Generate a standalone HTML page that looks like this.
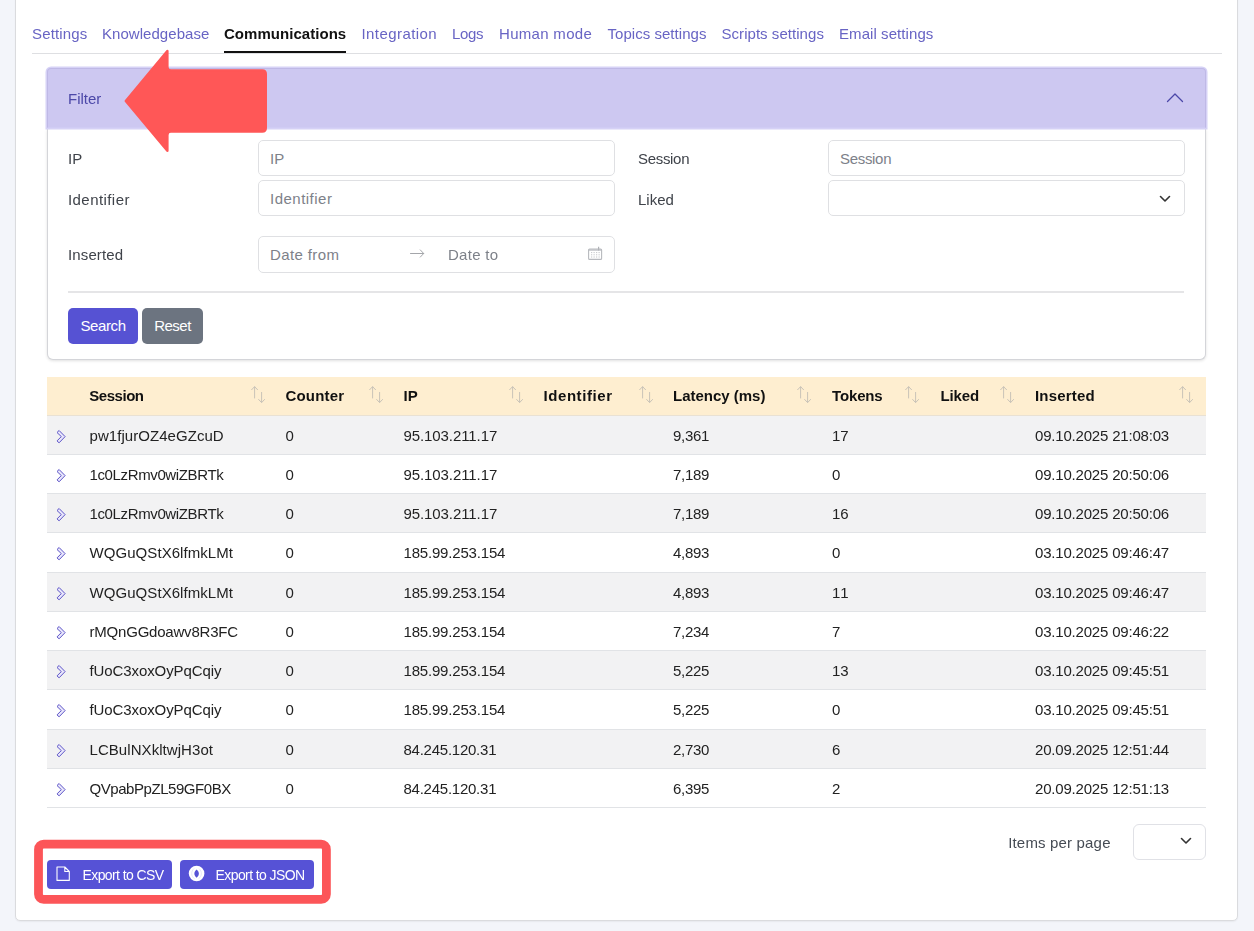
<!DOCTYPE html>
<html lang="en">
<head>
<meta charset="utf-8">
<title>Communications</title>
<style>
*{box-sizing:border-box;margin:0;padding:0}
html,body{width:1254px;height:931px;overflow:hidden}
body{background:#f3f5fa;font-family:"Liberation Sans",sans-serif;font-size:15px;color:#212529;position:relative}
.abs{position:absolute}
.t{white-space:nowrap}
.card{left:15px;top:-10px;width:1223px;height:931px;background:#fff;border:1px solid #dadbde;border-radius:5px;box-shadow:0 1px 2px rgba(0,0,0,.06)}
.tabs{left:32px;top:14px;width:1190px;height:40px;border-bottom:1px solid #dedfe2}
.tab{position:absolute;top:10px;font-size:15px;color:#6864c4;white-space:nowrap;line-height:20px}
.tab.active{color:#111;font-weight:700}
.tab.active::after{content:"";position:absolute;left:0;right:0;top:27px;height:2px;background:#111}
.fhead{left:47px;top:68px;width:1159px;height:60px;background:#cdc8f1;border:1px solid #bfb9e6;border-bottom-color:#d0ccf4;border-radius:4px 4px 0 0;box-shadow:0 0 0 1.5px #d6d2f6}
.fbody{left:47px;top:129px;width:1159px;height:231px;background:#fff;border:1px solid #d4d5d9;border-top:none;border-radius:0 0 6px 6px;box-shadow:0 1px 3px rgba(0,0,0,.12)}
.lbl{position:absolute;font-size:15px;color:#3f434a;line-height:20px;white-space:nowrap}
.inp{position:absolute;height:35.5px;width:357px;border:1px solid #dfe0e3;border-radius:5px;background:#fff;font-size:15px;color:#7d8189;line-height:36px;padding-left:11px;white-space:nowrap}
.btn{position:absolute;color:#fff;font-size:15px;border-radius:5px;text-align:center;white-space:nowrap}
.thead{left:47px;top:377px;width:1159px;height:38.5px;background:#feeed0;border-bottom:1px solid #e9e1d3;font-weight:700;color:#111;line-height:38px}
.row{left:47px;width:1159px;height:39.28px;border-bottom:1px solid #e1e3e6;line-height:39px;color:#222}
.row.odd{background:#f2f2f3}
.c{position:absolute;top:0;white-space:nowrap;font-size:15px}
.srt{position:absolute;top:8.5px}
.exp{position:absolute;left:8px;top:13px}
.xb{top:860px;height:29px;line-height:30px;font-size:14px;background:#5652d6;border-radius:4px;text-align:left}
</style>
</head>
<body>
<div id="wrap" style="position:absolute;left:0;top:0;width:1254px;height:931px;opacity:.999">
<div class="abs card"></div>
<div class="abs tabs">
  <span class="tab" style="left:0px"><span class="t kt" style="letter-spacing:0.155px">Settings</span></span>
  <span class="tab" style="left:70px"><span class="t kt" style="letter-spacing:0.045px">Knowledgebase</span></span>
  <span class="tab active" style="left:192px"><span class="t kt" style="letter-spacing:0.039px">Communications</span></span>
  <span class="tab" style="left:329.5px"><span class="t kt" style="letter-spacing:0.431px">Integration</span></span>
  <span class="tab" style="left:420px"><span class="t kt" style="letter-spacing:-0.310px">Logs</span></span>
  <span class="tab" style="left:467px"><span class="t kt" style="letter-spacing:0.306px">Human mode</span></span>
  <span class="tab" style="left:575.5px"><span class="t kt" style="letter-spacing:0.037px">Topics settings</span></span>
  <span class="tab" style="left:689.5px"><span class="t kt" style="letter-spacing:0.045px">Scripts settings</span></span>
  <span class="tab" style="left:807px"><span class="t kt" style="letter-spacing:0.071px">Email settings</span></span>
</div>
<div class="abs fbody"></div>
<div class="abs fhead"></div>
<div class="lbl" style="left:68px;top:89px;color:#4b47a8"><span class="t kl">Filter</span></div>
<svg class="abs" style="left:1166px;top:90px" width="18" height="16" viewBox="0 0 18 16"><path d="M1.5 11.5 L9 4 L16.5 11.5" fill="none" stroke="#4b47a8" stroke-width="1.3" stroke-linecap="round" stroke-linejoin="round"/></svg>
<div class="lbl" style="left:68px;top:149px"><span class="t kl">IP</span></div>
<div class="lbl" style="left:68px;top:190px"><span class="t kl" style="letter-spacing:0.430px">Identifier</span></div>
<div class="lbl" style="left:68px;top:245px"><span class="t kl" style="letter-spacing:0.127px">Inserted</span></div>
<div class="lbl" style="left:638px;top:149px"><span class="t kl" style="letter-spacing:-0.312px">Session</span></div>
<div class="lbl" style="left:638px;top:190px"><span class="t kl">Liked</span></div>
<div class="inp" style="left:258px;top:140px"><span class="t kp">IP</span></div>
<div class="inp" style="left:258px;top:180px"><span class="t kp" style="letter-spacing:0.485px">Identifier</span></div>
<div class="inp" style="left:828px;top:140px"><span class="t kp" style="letter-spacing:-0.312px">Session</span></div>
<div class="inp" style="left:828px;top:180px"></div>
<svg class="abs" style="left:1159px;top:194px" width="12" height="10" viewBox="0 0 12 10"><path d="M1.5 2.5 L6 7 L10.5 2.5" fill="none" stroke="#333" stroke-width="1.6" stroke-linecap="round" stroke-linejoin="round"/></svg>
<div class="inp" style="left:258px;top:236px;height:36.5px;line-height:35.5px"><span class="t kp" style="letter-spacing:0.380px">Date from</span><span style="position:absolute;left:189px;top:0"><span class="t kp" style="letter-spacing:0.289px">Date to</span></span></div>
<svg class="abs" style="left:409px;top:248px" width="17" height="12" viewBox="0 0 17 12"><path d="M1.5 5.5 H14.6 M11.3 1.9 L14.7 5.5 L11.3 9.1" fill="none" stroke="#a4a6aa" stroke-width="1" stroke-linecap="round" stroke-linejoin="round"/></svg>
<svg class="abs" style="left:587px;top:246px" width="16" height="16" viewBox="0 0 16 16"><rect x="1.6" y="3" width="13" height="10.4" rx="1" fill="none" stroke="#b7b9be" stroke-width="1.1"/><path d="M1.6 4 H14.6" fill="none" stroke="#b7b9be" stroke-width="1.3"/><path d="M11.6 0.8 V4.6" fill="none" stroke="#b0b2b7" stroke-width="1.2"/><path d="M4.2 6.6h1M6.6 6.6h1M9.2 6.6h1M11.6 6.6h1M4.2 8.8h1M6.6 8.8h1M9.2 8.8h1M11.6 8.8h1M4.2 11h1M6.6 11h1M9.2 11h1M11.6 11h1" stroke="#b7b9be" stroke-width="1"/></svg>
<div class="abs" style="left:68px;top:291px;width:1116px;height:2px;background:#e5e5e7"></div>
<div class="btn" style="left:68px;top:308px;width:70px;height:36px;line-height:36px;background:#5652d3"><span class="t kb" style="letter-spacing:-0.387px">Search</span></div>
<div class="btn" style="left:142px;top:308px;width:61px;height:36px;line-height:36px;background:#6c7480"><span class="t kb" style="letter-spacing:-0.497px">Reset</span></div>
<div class="abs thead"><span class="c" style="left:42.3px"><span class="t kh" style="letter-spacing:-0.473px">Session</span></span><span class="c" style="left:238.5px"><span class="t kh" style="letter-spacing:0.183px">Counter</span></span><span class="c" style="left:356.5px"><span class="t kh">IP</span></span><span class="c" style="left:496.5px"><span class="t kh" style="letter-spacing:0.572px">Identifier</span></span><span class="c" style="left:626px"><span class="t kh" style="letter-spacing:-0.012px">Latency (ms)</span></span><span class="c" style="left:785px"><span class="t kh" style="letter-spacing:-0.142px">Tokens</span></span><span class="c" style="left:893.5px"><span class="t kh" style="letter-spacing:-0.147px">Liked</span></span><span class="c" style="left:988px"><span class="t kh" style="letter-spacing:0.192px">Inserted</span></span><svg class="srt" style="left:204.0px" width="15" height="18" viewBox="0 0 15 18"><path d="M3.6 12.4 V0.6 M0.4 4 L3.6 0.6 L6.8 4 M10.6 6 V16.6 M7.4 13.2 L10.6 16.6 L13.8 13.2" fill="none" stroke="#c9c3b8" stroke-width="1"/></svg><svg class="srt" style="left:321.8px" width="15" height="18" viewBox="0 0 15 18"><path d="M3.6 12.4 V0.6 M0.4 4 L3.6 0.6 L6.8 4 M10.6 6 V16.6 M7.4 13.2 L10.6 16.6 L13.8 13.2" fill="none" stroke="#c9c3b8" stroke-width="1"/></svg><svg class="srt" style="left:461.7px" width="15" height="18" viewBox="0 0 15 18"><path d="M3.6 12.4 V0.6 M0.4 4 L3.6 0.6 L6.8 4 M10.6 6 V16.6 M7.4 13.2 L10.6 16.6 L13.8 13.2" fill="none" stroke="#c9c3b8" stroke-width="1"/></svg><svg class="srt" style="left:591.7px" width="15" height="18" viewBox="0 0 15 18"><path d="M3.6 12.4 V0.6 M0.4 4 L3.6 0.6 L6.8 4 M10.6 6 V16.6 M7.4 13.2 L10.6 16.6 L13.8 13.2" fill="none" stroke="#c9c3b8" stroke-width="1"/></svg><svg class="srt" style="left:749.7px" width="15" height="18" viewBox="0 0 15 18"><path d="M3.6 12.4 V0.6 M0.4 4 L3.6 0.6 L6.8 4 M10.6 6 V16.6 M7.4 13.2 L10.6 16.6 L13.8 13.2" fill="none" stroke="#c9c3b8" stroke-width="1"/></svg><svg class="srt" style="left:858.4px" width="15" height="18" viewBox="0 0 15 18"><path d="M3.6 12.4 V0.6 M0.4 4 L3.6 0.6 L6.8 4 M10.6 6 V16.6 M7.4 13.2 L10.6 16.6 L13.8 13.2" fill="none" stroke="#c9c3b8" stroke-width="1"/></svg><svg class="srt" style="left:953.4px" width="15" height="18" viewBox="0 0 15 18"><path d="M3.6 12.4 V0.6 M0.4 4 L3.6 0.6 L6.8 4 M10.6 6 V16.6 M7.4 13.2 L10.6 16.6 L13.8 13.2" fill="none" stroke="#c9c3b8" stroke-width="1"/></svg><svg class="srt" style="left:1131.6px" width="15" height="18" viewBox="0 0 15 18"><path d="M3.6 12.4 V0.6 M0.4 4 L3.6 0.6 L6.8 4 M10.6 6 V16.6 M7.4 13.2 L10.6 16.6 L13.8 13.2" fill="none" stroke="#c9c3b8" stroke-width="1"/></svg></div>
<div class="abs row odd" style="top:415.50px"><svg class="exp" width="12" height="16" viewBox="0 0 12 16"><path d="M4.1 1.5 L10.1 7.6 L4.1 13.8 L2 11.9 L6.3 7.6 L2 3.5 Z" fill="#e9e7fb" stroke="#5d54c8" stroke-width="1" stroke-linejoin="round"/></svg><span class="c" style="left:42.5px"><span class="t kd" style="letter-spacing:0.054px">pw1fjurOZ4eGZcuD</span></span><span class="c" style="left:238.5px"><span class="t kd">0</span></span><span class="c" style="left:356.5px"><span class="t kd" style="letter-spacing:-0.085px">95.103.211.17</span></span><span class="c" style="left:626px"><span class="t kd" style="letter-spacing:-0.286px">9,361</span></span><span class="c" style="left:785px"><span class="t kd" style="letter-spacing:0.007px">17</span></span><span class="c" style="left:988px"><span class="t kd" style="letter-spacing:-0.191px">09.10.2025 21:08:03</span></span></div>
<div class="abs row" style="top:454.78px"><svg class="exp" width="12" height="16" viewBox="0 0 12 16"><path d="M4.1 1.5 L10.1 7.6 L4.1 13.8 L2 11.9 L6.3 7.6 L2 3.5 Z" fill="#e9e7fb" stroke="#5d54c8" stroke-width="1" stroke-linejoin="round"/></svg><span class="c" style="left:42.5px"><span class="t kd" style="letter-spacing:-0.371px">1c0LzRmv0wiZBRTk</span></span><span class="c" style="left:238.5px"><span class="t kd">0</span></span><span class="c" style="left:356.5px"><span class="t kd" style="letter-spacing:-0.085px">95.103.211.17</span></span><span class="c" style="left:626px"><span class="t kd" style="letter-spacing:-0.286px">7,189</span></span><span class="c" style="left:785px"><span class="t kd">0</span></span><span class="c" style="left:988px"><span class="t kd" style="letter-spacing:-0.191px">09.10.2025 20:50:06</span></span></div>
<div class="abs row odd" style="top:494.06px"><svg class="exp" width="12" height="16" viewBox="0 0 12 16"><path d="M4.1 1.5 L10.1 7.6 L4.1 13.8 L2 11.9 L6.3 7.6 L2 3.5 Z" fill="#e9e7fb" stroke="#5d54c8" stroke-width="1" stroke-linejoin="round"/></svg><span class="c" style="left:42.5px"><span class="t kd" style="letter-spacing:-0.371px">1c0LzRmv0wiZBRTk</span></span><span class="c" style="left:238.5px"><span class="t kd">0</span></span><span class="c" style="left:356.5px"><span class="t kd" style="letter-spacing:-0.085px">95.103.211.17</span></span><span class="c" style="left:626px"><span class="t kd" style="letter-spacing:-0.286px">7,189</span></span><span class="c" style="left:785px"><span class="t kd" style="letter-spacing:0.007px">16</span></span><span class="c" style="left:988px"><span class="t kd" style="letter-spacing:-0.191px">09.10.2025 20:50:06</span></span></div>
<div class="abs row" style="top:533.34px"><svg class="exp" width="12" height="16" viewBox="0 0 12 16"><path d="M4.1 1.5 L10.1 7.6 L4.1 13.8 L2 11.9 L6.3 7.6 L2 3.5 Z" fill="#e9e7fb" stroke="#5d54c8" stroke-width="1" stroke-linejoin="round"/></svg><span class="c" style="left:42.5px"><span class="t kd" style="letter-spacing:0.065px">WQGuQStX6lfmkLMt</span></span><span class="c" style="left:238.5px"><span class="t kd">0</span></span><span class="c" style="left:356.5px"><span class="t kd" style="letter-spacing:-0.183px">185.99.253.154</span></span><span class="c" style="left:626px"><span class="t kd" style="letter-spacing:-0.286px">4,893</span></span><span class="c" style="left:785px"><span class="t kd">0</span></span><span class="c" style="left:988px"><span class="t kd" style="letter-spacing:-0.191px">03.10.2025 09:46:47</span></span></div>
<div class="abs row odd" style="top:572.62px"><svg class="exp" width="12" height="16" viewBox="0 0 12 16"><path d="M4.1 1.5 L10.1 7.6 L4.1 13.8 L2 11.9 L6.3 7.6 L2 3.5 Z" fill="#e9e7fb" stroke="#5d54c8" stroke-width="1" stroke-linejoin="round"/></svg><span class="c" style="left:42.5px"><span class="t kd" style="letter-spacing:0.065px">WQGuQStX6lfmkLMt</span></span><span class="c" style="left:238.5px"><span class="t kd">0</span></span><span class="c" style="left:356.5px"><span class="t kd" style="letter-spacing:-0.183px">185.99.253.154</span></span><span class="c" style="left:626px"><span class="t kd" style="letter-spacing:-0.286px">4,893</span></span><span class="c" style="left:785px"><span class="t kd" style="letter-spacing:1.125px">11</span></span><span class="c" style="left:988px"><span class="t kd" style="letter-spacing:-0.191px">03.10.2025 09:46:47</span></span></div>
<div class="abs row" style="top:611.90px"><svg class="exp" width="12" height="16" viewBox="0 0 12 16"><path d="M4.1 1.5 L10.1 7.6 L4.1 13.8 L2 11.9 L6.3 7.6 L2 3.5 Z" fill="#e9e7fb" stroke="#5d54c8" stroke-width="1" stroke-linejoin="round"/></svg><span class="c" style="left:42.5px"><span class="t kd" style="letter-spacing:-0.208px">rMQnGGdoawv8R3FC</span></span><span class="c" style="left:238.5px"><span class="t kd">0</span></span><span class="c" style="left:356.5px"><span class="t kd" style="letter-spacing:-0.183px">185.99.253.154</span></span><span class="c" style="left:626px"><span class="t kd" style="letter-spacing:-0.286px">7,234</span></span><span class="c" style="left:785px"><span class="t kd">7</span></span><span class="c" style="left:988px"><span class="t kd" style="letter-spacing:-0.191px">03.10.2025 09:46:22</span></span></div>
<div class="abs row odd" style="top:651.18px"><svg class="exp" width="12" height="16" viewBox="0 0 12 16"><path d="M4.1 1.5 L10.1 7.6 L4.1 13.8 L2 11.9 L6.3 7.6 L2 3.5 Z" fill="#e9e7fb" stroke="#5d54c8" stroke-width="1" stroke-linejoin="round"/></svg><span class="c" style="left:42.5px"><span class="t kd" style="letter-spacing:-0.093px">fUoC3xoxOyPqCqiy</span></span><span class="c" style="left:238.5px"><span class="t kd">0</span></span><span class="c" style="left:356.5px"><span class="t kd" style="letter-spacing:-0.183px">185.99.253.154</span></span><span class="c" style="left:626px"><span class="t kd" style="letter-spacing:-0.286px">5,225</span></span><span class="c" style="left:785px"><span class="t kd" style="letter-spacing:0.007px">13</span></span><span class="c" style="left:988px"><span class="t kd" style="letter-spacing:-0.191px">03.10.2025 09:45:51</span></span></div>
<div class="abs row" style="top:690.46px"><svg class="exp" width="12" height="16" viewBox="0 0 12 16"><path d="M4.1 1.5 L10.1 7.6 L4.1 13.8 L2 11.9 L6.3 7.6 L2 3.5 Z" fill="#e9e7fb" stroke="#5d54c8" stroke-width="1" stroke-linejoin="round"/></svg><span class="c" style="left:42.5px"><span class="t kd" style="letter-spacing:-0.093px">fUoC3xoxOyPqCqiy</span></span><span class="c" style="left:238.5px"><span class="t kd">0</span></span><span class="c" style="left:356.5px"><span class="t kd" style="letter-spacing:-0.183px">185.99.253.154</span></span><span class="c" style="left:626px"><span class="t kd" style="letter-spacing:-0.286px">5,225</span></span><span class="c" style="left:785px"><span class="t kd">0</span></span><span class="c" style="left:988px"><span class="t kd" style="letter-spacing:-0.191px">03.10.2025 09:45:51</span></span></div>
<div class="abs row odd" style="top:729.74px"><svg class="exp" width="12" height="16" viewBox="0 0 12 16"><path d="M4.1 1.5 L10.1 7.6 L4.1 13.8 L2 11.9 L6.3 7.6 L2 3.5 Z" fill="#e9e7fb" stroke="#5d54c8" stroke-width="1" stroke-linejoin="round"/></svg><span class="c" style="left:42.5px"><span class="t kd" style="letter-spacing:0.063px">LCBulNXkltwjH3ot</span></span><span class="c" style="left:238.5px"><span class="t kd">0</span></span><span class="c" style="left:356.5px"><span class="t kd" style="letter-spacing:-0.245px">84.245.120.31</span></span><span class="c" style="left:626px"><span class="t kd" style="letter-spacing:-0.286px">2,730</span></span><span class="c" style="left:785px"><span class="t kd">6</span></span><span class="c" style="left:988px"><span class="t kd" style="letter-spacing:-0.191px">20.09.2025 12:51:44</span></span></div>
<div class="abs row" style="top:769.02px"><svg class="exp" width="12" height="16" viewBox="0 0 12 16"><path d="M4.1 1.5 L10.1 7.6 L4.1 13.8 L2 11.9 L6.3 7.6 L2 3.5 Z" fill="#e9e7fb" stroke="#5d54c8" stroke-width="1" stroke-linejoin="round"/></svg><span class="c" style="left:42.5px"><span class="t kd" style="letter-spacing:-0.442px">QVpabPpZL59GF0BX</span></span><span class="c" style="left:238.5px"><span class="t kd">0</span></span><span class="c" style="left:356.5px"><span class="t kd" style="letter-spacing:-0.245px">84.245.120.31</span></span><span class="c" style="left:626px"><span class="t kd" style="letter-spacing:-0.286px">6,395</span></span><span class="c" style="left:785px"><span class="t kd">2</span></span><span class="c" style="left:988px"><span class="t kd" style="letter-spacing:-0.191px">20.09.2025 12:51:13</span></span></div>
<div class="lbl" style="left:1008.2px;top:832.5px;color:#454b54"><span class="t kl" style="letter-spacing:0.172px">Items per page</span></div>
<div class="abs" style="left:1133px;top:824px;width:73px;height:36px;border:1px solid #e0e1e6;border-radius:6px;background:#fff"></div>
<svg class="abs" style="left:1180px;top:836px" width="12" height="10" viewBox="0 0 12 10"><path d="M1.5 2.5 L6 7 L10.5 2.5" fill="none" stroke="#333" stroke-width="1.6" stroke-linecap="round" stroke-linejoin="round"/></svg>
<svg class="abs" style="left:30px;top:835px" width="306" height="74" viewBox="30 835 306 74"><rect x="38.5" y="844.2" width="287.9" height="55.2" rx="5.2" fill="none" stroke="#fc5558" stroke-width="8.8"/></svg>
<div class="btn xb" style="left:47px;width:125px"><span style="position:absolute;left:35.5px;top:0"><span class="t kx" style="letter-spacing:-0.600px">Export to CSV</span></span>
<svg style="position:absolute;left:9.2px;top:6.2px" width="15" height="16" viewBox="0 0 15 16"><path d="M1 1 H8.8 L13.3 5.5 V14.4 H1 Z M8.8 1 V5.5 H13.3" fill="none" stroke="#fff" stroke-width="1.1" stroke-linejoin="round"/></svg></div>
<div class="btn xb" style="left:180px;width:134px"><span style="position:absolute;left:35.5px;top:0"><span class="t kx" style="letter-spacing:-0.581px">Export to JSON</span></span>
<svg style="position:absolute;left:8px;top:5px" width="18" height="18" viewBox="0 0 18 18"><circle cx="8.6" cy="8.5" r="7.8" fill="#fff"/><path d="M8.6 4.6 C11.6 7 11.6 10.4 8.6 12.8 C5.6 10.4 5.6 7 8.6 4.6 Z" fill="#5652d6"/><path d="M6.2 3.4 C2.6 6.5 3 11.5 6.6 13.8 M11 3.6 C14.4 6.6 14 11.4 10.6 13.6" fill="none" stroke="#dcdaf6" stroke-width="0.7"/></svg></div>
<svg class="abs" style="left:120px;top:45px" width="150" height="112" viewBox="120 45 150 112"><path d="M125.8 100.95 L167.35 51.05 V67 Q167.35 70.45 170.8 70.45 H262.25 Q265.75 70.45 265.75 73.95 V128.05 Q265.75 131.55 262.25 131.55 H170.8 Q167.35 131.55 167.35 135 V150.8 Z" fill="#ff5757" stroke="#ff5757" stroke-width="2.5" stroke-linejoin="round"/></svg>
</div>
</body>
</html>
